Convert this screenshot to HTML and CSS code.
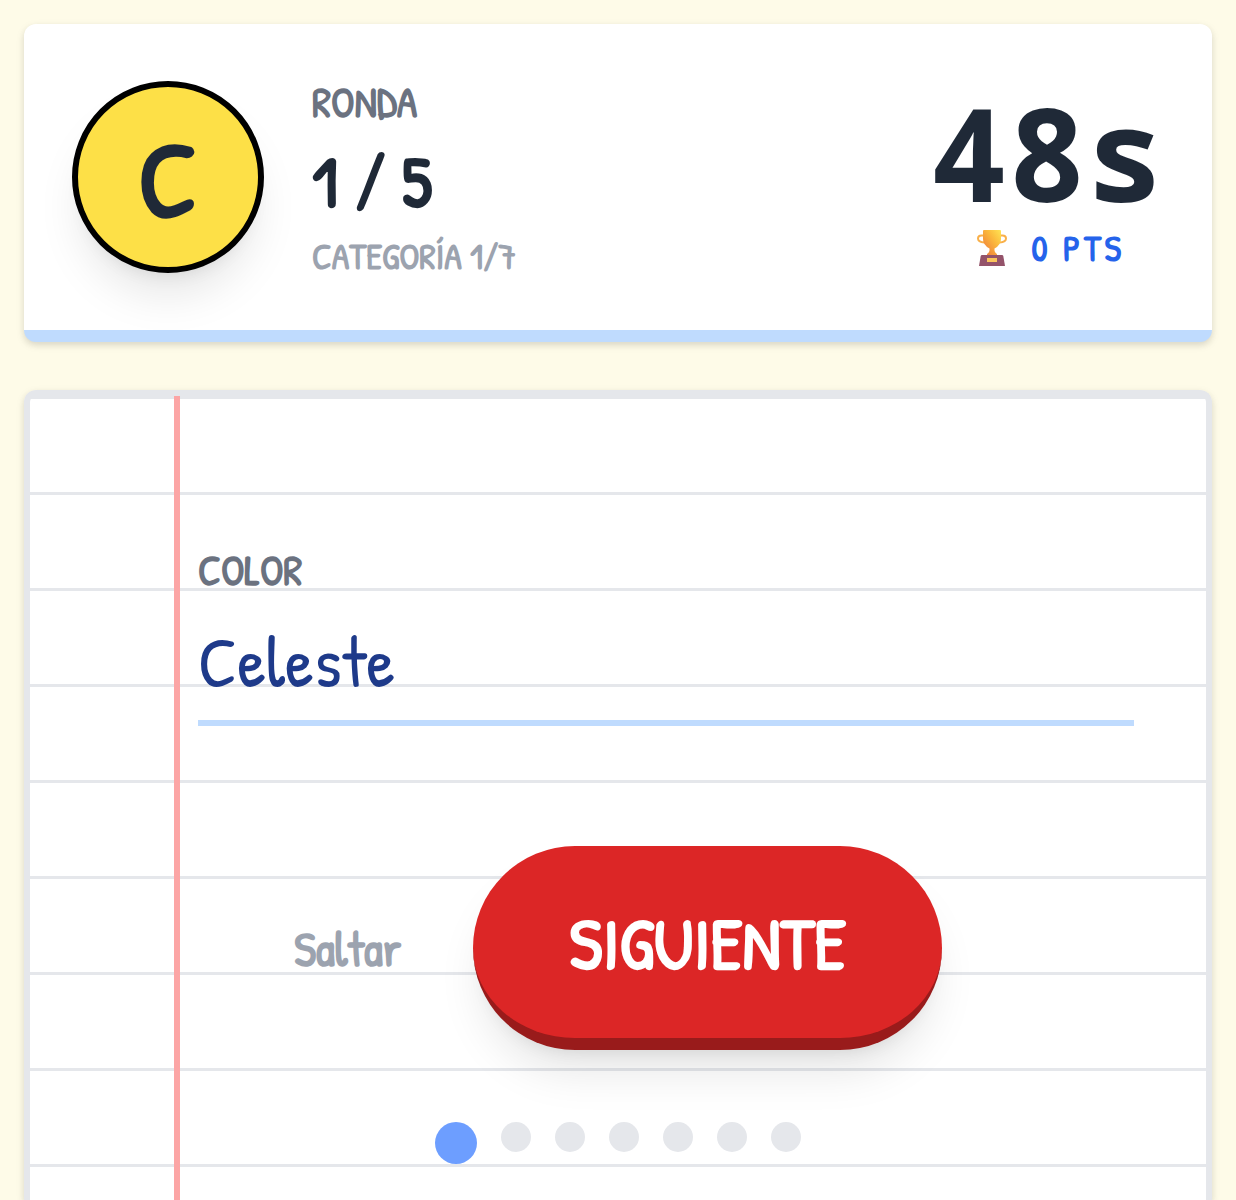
FILE: index.html
```
<!DOCTYPE html>
<html lang="es">
<head>
  <meta charset="utf-8">
  <meta name="viewport" content="width=device-width, initial-scale=1">
  <title>Ronda 1</title>
  <link rel="stylesheet" href="styles.css">
</head>
<body>
  <header class="header">
    <div class="letter">C</div>
    <div class="round">
      <div class="round__label">RONDA</div>
      <div class="round__number">1 / 5</div>
      <div class="round__category">CATEGORÍA 1/7</div>
    </div>
    <div class="score">
      <div class="score__time">48s</div>
      <div class="score__points">
        <svg class="trophy" viewBox="0 0 30 36" aria-hidden="true">
          <defs>
            <linearGradient id="gold" x1="0" y1="1" x2="1" y2="0">
              <stop offset="0.2" stop-color="#f18a3c"/>
              <stop offset="0.6" stop-color="#fbb83c"/>
              <stop offset="1" stop-color="#ffe454"/>
            </linearGradient>
          </defs>
          <path d="M7 5.500H4.500Q1 5.500 1 8.500Q1 12 7.500 12.500M23 5.500H25.500Q29 5.500 29 8.500Q29 12 22.500 12.500" fill="none" stroke="#f9b04a" stroke-width="2"/>
          <path d="M6 1Q6 0 7 0H23Q24 0 24 1V9Q24 15 17.500 18.500Q17 22 20 24V26H10V24Q13 22 12.500 18.500Q6 15 6 9Z" fill="url(#gold)"/>
          <path d="M5 25H25Q26 25 26.300 26L28 36H2L3.700 26Q4 25 5 25Z" fill="#94536a"/>
          <rect x="10" y="28" width="10" height="4" fill="#fbc45c"/>
        </svg>
        <span>0 PTS</span>
      </div>
    </div>
  </header>

  <main class="sheet">
    <form class="form">
      <div class="field">
        <label class="field__label" for="answer">COLOR</label>
        <input class="field__input" id="answer" type="text" value="Celeste" autocomplete="off" spellcheck="false">
      </div>
      <div class="actions">
        <button class="skip" type="button">Saltar</button>
        <button class="next" type="button">SIGUIENTE</button>
      </div>
    </form>
    <div class="dots">
      <span class="dot dot--active"></span>
      <span class="dot"></span>
      <span class="dot"></span>
      <span class="dot"></span>
      <span class="dot"></span>
      <span class="dot"></span>
      <span class="dot"></span>
    </div>
  </main>
</body>
</html>
```

FILE: styles.css
```
*{
  box-sizing: border-box;
}
body{
  margin: 0;
  min-height: 100vh;
  padding: 24px 24px 0;
  display: flex;
  flex-direction: column;
  gap: 48px;
  background: #fefbe8;
  color: #1f2937;
  font-family: "Patrick Hand", Roboto, sans-serif;
}

/* header */
.header{
  display: flex;
  align-items: center;
  gap: 48px;
  padding: 48px;
  background: #fff;
  border-bottom: 12px solid #bfdbfe;
  border-radius: 12px;
  box-shadow: 0 3px 9px rgba(0,0,0,0.1), 0 3px 6px rgba(0,0,0,0.06);
}
.letter{
  display: flex;
  align-items: center;
  justify-content: center;
  flex-shrink: 0;
  width: 192px;
  height: 192px;
  border: 6px solid #000;
  border-radius: 50%;
  background: #fde047;
  font-size: 108px;
  font-weight: 700;
  box-shadow: 0 30px 45px -9px rgba(0,0,0,0.1), 0 12px 18px -12px rgba(0,0,0,0.1);
}
.round{
  font-weight: 700;
}
.round__label{
  font-size: 42px;
  line-height: 60px;
  color: #6b7280;
}
.round__number{
  font-size: 72px;
  line-height: 98px;
}
.round__category{
  font-size: 36px;
  line-height: 52px;
  color: #9ca3af;
}
.score{
  margin-left: auto;
  font-weight: 700;
  text-align: center;
}
.score__time{
  font-family: Consolas, "Noto Sans Mono", "DejaVu Sans Mono", monospace;
  font-size: 130px;
  line-height: 142px;
}
.score__points{
  display: flex;
  align-items: center;
  justify-content: center;
  gap: 24px;
  padding-left: 8px;
  font-size: 36px;
  line-height: 50px;
  letter-spacing: 0.1em;
  color: #2563eb;
}
.trophy{
  width: 30px;
  height: 36px;
}

/* notebook sheet */
.sheet{
  position: relative;
  flex: 1;
  padding-bottom: 36px;
  border: 6px solid #e5e7eb;
  border-bottom: 0;
  border-radius: 12px 12px 0 0;
  background: repeating-linear-gradient(#e5e7eb 0, #e5e7eb 3px, #fff 3px, #fff 96px);
  box-shadow: 0 3px 9px rgba(0,0,0,0.1), 0 3px 6px rgba(0,0,0,0.06);
}
.sheet::before{
  content: "";
  position: absolute;
  top: 0;
  bottom: 0;
  left: 144px;
  width: 6px;
  background: #fca5a5;
}
.field{
  display: flex;
  flex-direction: column;
  padding: 144px 72px 0 168px;
}
.field__label{
  font-size: 42px;
  font-weight: 700;
  line-height: 60px;
  color: #6b7280;
}
.field__input{
  width: 100%;
  height: 126px;
  padding: 0;
  border: 0;
  border-bottom: 6px solid #bfdbfe;
  border-radius: 0;
  outline: 0;
  background: transparent;
  font-family: inherit;
  font-size: 72px;
  color: #1e3a8a;
}
.actions{
  display: flex;
  align-items: center;
  justify-content: center;
  gap: 72px;
  margin-top: 120px;
}
.skip{
  padding: 0;
  border: 0;
  background: none;
  font-family: inherit;
  font-size: 48px;
  font-weight: 700;
  color: #9ca3af;
  cursor: pointer;
}
.next{
  height: 204px;
  padding: 0 96px;
  border: 0;
  border-bottom: 12px solid #991b1b;
  border-radius: 102px;
  background: #dc2626;
  font-family: inherit;
  font-size: 72px;
  font-weight: 700;
  color: #fff;
  cursor: pointer;
  box-shadow: 0 30px 45px -9px rgba(0,0,0,0.1), 0 12px 18px -12px rgba(0,0,0,0.1);
}
.next:hover{
  background: #ef4444;
}
.dots{
  display: flex;
  justify-content: center;
  gap: 24px;
  margin-top: 72px;
}
.dot{
  width: 30px;
  height: 30px;
  border-radius: 50%;
  background: #e5e7eb;
}
.dot--active{
  width: 42px;
  height: 42px;
  background: #6d9eff;
}
```
